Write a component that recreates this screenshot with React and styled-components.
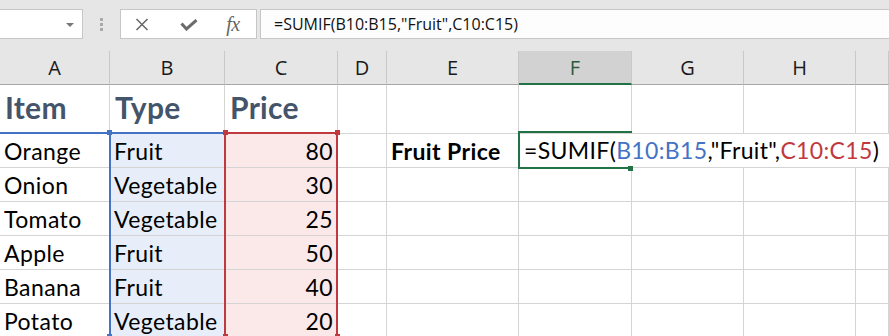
import React from 'react';
import styled, { createGlobalStyle } from 'styled-components';

const GlobalStyle = createGlobalStyle`
  html, body { margin: 0; padding: 0; background: #fff; overflow: hidden; }
  #root { width: 889px; height: 336px; overflow: hidden; }
`;

const BLUE = '#4472c4';
const RED = '#c0393f';
const GREEN = '#217346';
const GRID = '#d4d4d4';
const CELL_FONT = `"Lato", "Noto Sans", sans-serif`;

const Window = styled.div`
  width: 889px;
  height: 336px;
  overflow: hidden;
  display: flex;
  flex-direction: column;
  background: #fff;
`;

/* ---------- formula toolbar ---------- */
const Toolbar = styled.div`
  flex: none;
  height: 51px;
  box-sizing: border-box;
  padding-top: 9px;
  background: #e6e6e6;
  display: flex;
  align-items: flex-start;
`;

const NameBox = styled.div`
  width: 83px;
  height: 30px;
  box-sizing: border-box;
  background: #fff;
  border: 1px solid #c6c6c6;
  border-left: none;
  display: flex;
  align-items: center;
  justify-content: flex-end;
  padding-right: 8px;
`;

const DropArrow = styled.span`
  width: 0;
  height: 0;
  border-left: 4px solid transparent;
  border-right: 4px solid transparent;
  border-top: 4px solid #777;
  margin-top: 1px;
`;

const Grip = styled.div`
  width: 37px;
  height: 30px;
  display: flex;
  flex-direction: column;
  align-items: center;
  justify-content: center;
  gap: 2px;
`;

const GripDot = styled.span`
  width: 3px;
  height: 3px;
  background: #a9a9a9;
`;

const FxBox = styled.div`
  width: 137px;
  height: 30px;
  box-sizing: border-box;
  background: #fff;
  border: 1px solid #c6c6c6;
  display: flex;
  align-items: center;
  padding-left: 14px;
`;

const IconSlot = styled.span`
  display: flex;
  align-items: center;
  justify-content: center;
  width: ${p => p.$w}px;
  margin-left: ${p => p.$ml || 0}px;
  margin-top: ${p => p.$mt || 0}px;
`;

const FxText = styled.span`
  font-family: "Liberation Serif", "DejaVu Serif", serif;
  font-style: italic;
  font-size: 20px;
  color: #666;
  line-height: 1;
  letter-spacing: -0.5px;
`;

const FormulaInput = styled.div`
  flex: 1;
  margin-left: 3px;
  height: 30px;
  box-sizing: border-box;
  background: #fdfdfd;
  border: 1px solid #c6c6c6;
  border-right: none;
  display: flex;
  align-items: center;
  padding-left: 13px;
  font-family: "Open Sans", "Noto Sans", sans-serif;
  font-size: 16px;
  color: #111;
  white-space: nowrap;
`;

/* ---------- sheet ---------- */
const Sheet = styled.div`
  position: relative;
  flex: 1;
  display: grid;
  grid-template-columns: 110px 115px 113px 49px 132px 113px 112px 112px 1fr;
  grid-template-rows: 34px 49px repeat(6, 34px);
  overflow: hidden;
`;

const ColHead = styled.div`
  box-sizing: border-box;
  background: ${p => (p.$active ? '#d2d2d2' : '#e6e6e6')};
  border-right: 1px solid #c8c8c8;
  border-bottom: ${p => (p.$active ? `2px solid ${GREEN}` : '1px solid #a6a6a6')};
  display: flex;
  align-items: center;
  justify-content: center;
  padding-top: ${p => (p.$active ? 1 : 0)}px;
  font-family: "Open Sans", "Noto Sans", sans-serif;
  font-size: 20px;
  color: ${p => (p.$active ? '#2c5a3c' : '#1a1a1a')};
`;

const Cell = styled.div`
  box-sizing: border-box;
  border-right: 1px solid ${GRID};
  border-bottom: ${p => (p.$heading ? `2px solid ${BLUE}` : `1px solid ${GRID}`)};
  background: ${p => p.$bg || '#fff'};
  display: flex;
  align-items: flex-end;
  justify-content: ${p => (p.$right ? 'flex-end' : 'flex-start')};
  padding: 0 4px 4px 4px;
  font-family: ${CELL_FONT};
  font-size: 23px;
  letter-spacing: 0.4px;
  font-weight: ${p => (p.$bold ? 700 : 400)};
  color: #000;
  white-space: nowrap;
  overflow: visible;
  line-height: 1;
`;

const TitleCell = styled(Cell)`
  font-size: 30px;
  letter-spacing: 0.3px;
  font-weight: 700;
  color: #44546a;
  padding-bottom: 10px;
  padding-left: 5px;
`;

const RangeBox = styled.div`
  position: absolute;
  left: ${p => p.$x}px;
  top: ${p => p.$y}px;
  width: ${p => p.$w}px;
  height: ${p => p.$h}px;
  box-sizing: border-box;
  border: 2px solid ${p => p.$color};
  pointer-events: none;
`;

const Handle = styled.span`
  position: absolute;
  width: 5px;
  height: 5px;
  background: ${p => p.$color};
  left: ${p => p.$x}px;
  top: ${p => p.$y}px;
  pointer-events: none;
`;

const Editor = styled.div`
  position: absolute;
  left: 520px;
  top: 83px;
  right: 0;
  height: 33px;
  background: #fff;
  display: flex;
  align-items: flex-end;
  padding: 0 0 5px 4px;
  box-sizing: border-box;
  font-family: ${CELL_FONT};
  font-size: 23px;
  letter-spacing: 0.35px;
  line-height: 1;
  color: #000;
  white-space: nowrap;
`;

const Ref = styled.span`
  color: ${p => p.$color};
`;

const ActiveCell = styled.div`
  position: absolute;
  left: 518px;
  top: 80px;
  width: 114px;
  height: 38px;
  box-sizing: border-box;
  border: 2px solid ${GREEN};
  border-right: none;
  pointer-events: none;
`;

const columns = ['A', 'B', 'C', 'D', 'E', 'F', 'G', 'H', ''];

const rows = [
  ['Orange', 'Fruit', 80],
  ['Onion', 'Vegetable', 30],
  ['Tomato', 'Vegetable', 25],
  ['Apple', 'Fruit', 50],
  ['Banana', 'Fruit', 40],
  ['Potato', 'Vegetable', 20],
];

const BLUE_BG = '#e7eef9';
const RED_BG = '#fbe9e9';

function XIcon() {
  return (
    <svg width="14" height="13" viewBox="0 0 14 13">
      <path d="M1.5 1 L12.5 12 M12.5 1 L1.5 12" stroke="#6b6b6b" strokeWidth="1.6" fill="none" />
    </svg>
  );
}

function CheckIcon() {
  return (
    <svg width="18" height="12" viewBox="0 0 18 12">
      <path d="M1.5 4.5 L6.5 10 L16.5 1.2" stroke="#6b6b6b" strokeWidth="3" fill="none" />
    </svg>
  );
}

export default function App() {
  return (
    <Window>
      <GlobalStyle />
      <Toolbar>
        <NameBox>
          <DropArrow />
        </NameBox>
        <Grip>
          <GripDot />
          <GripDot />
          <GripDot />
        </Grip>
        <FxBox>
          <IconSlot $w={14}><XIcon /></IconSlot>
          <IconSlot $w={18} $ml={31} $mt={2}><CheckIcon /></IconSlot>
          <IconSlot $w={18} $ml={26}><FxText>fx</FxText></IconSlot>
        </FxBox>
        <FormulaInput>=SUMIF(B10:B15,"Fruit",C10:C15)</FormulaInput>
      </Toolbar>

      <Sheet>
        {columns.map((c, i) => (
          <ColHead key={'h' + i} $active={c === 'F'}>{c}</ColHead>
        ))}

        <TitleCell $heading>Item</TitleCell>
        <TitleCell $heading>Type</TitleCell>
        <TitleCell $heading>Price</TitleCell>
        {columns.slice(3).map((c, i) => (
          <Cell key={'t' + i} />
        ))}

        {rows.map((r, ri) => (
          <React.Fragment key={ri}>
            <Cell>{r[0]}</Cell>
            <Cell $bg={BLUE_BG}>{r[1]}</Cell>
            <Cell $bg={RED_BG} $right>{r[2]}</Cell>
            <Cell />
            <Cell $bold>{ri === 0 ? 'Fruit Price' : ''}</Cell>
            <Cell />
            <Cell />
            <Cell />
            <Cell />
          </React.Fragment>
        ))}

        <RangeBox $color={BLUE} $x={109} $y={81} $w={117} $h={206} />
        <RangeBox $color={RED} $x={224} $y={81} $w={114} $h={206} />
        <Handle $color={BLUE} $x={107} $y={79} />
        <Handle $color={RED} $x={223} $y={79} />
        <Handle $color={RED} $x={335} $y={79} />
        <Handle $color={BLUE} $x={107} $y={283} />
        <Handle $color={RED} $x={223} $y={283} />
        <Handle $color={RED} $x={335} $y={283} />

        <Editor>
          =SUMIF(<Ref $color={BLUE}>B10:B15</Ref>,"Fruit",<Ref $color={RED}>C10:C15</Ref>)
        </Editor>
        <ActiveCell />
        <Handle $color={GREEN} $x={628} $y={115} />
      </Sheet>
    </Window>
  );
}
